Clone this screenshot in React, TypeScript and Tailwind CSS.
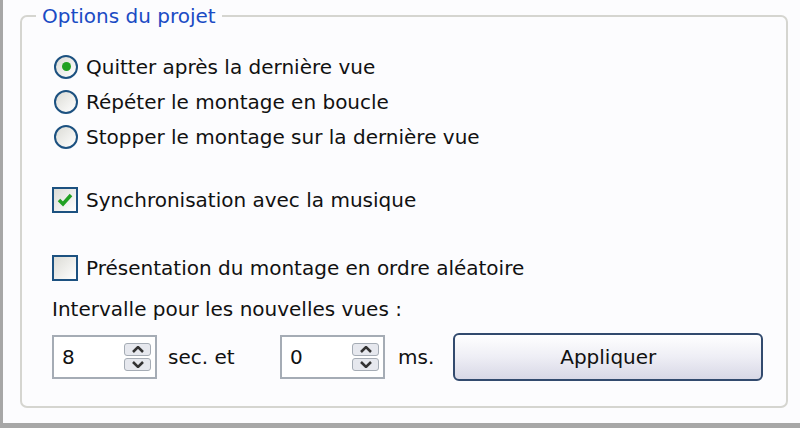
import React from "react";

const font = { fontFamily: '"DejaVu Sans", Tahoma, sans-serif' };

function Radio({ checked, label }: { checked?: boolean; label: string }) {
  return (
    <label className="flex items-center h-[35px]">
      <span className="w-[24px] h-[24px] rounded-full border-2 border-[#1c5180] bg-gradient-to-br from-[#dcdcd6] to-white flex items-center justify-center">
        {checked && <span className="w-[9px] h-[9px] rounded-full bg-[#21a121]" />}
      </span>
      <span className="ml-[8px]">{label}</span>
    </label>
  );
}

function Check({ checked, label }: { checked?: boolean; label: string }) {
  return (
    <label className="flex items-center h-[30px]">
      <span className="w-[26px] h-[26px] border-2 border-[#1c5180] bg-gradient-to-br from-[#dcdcd6] to-white flex items-center justify-center">
        {checked && (
          <svg width="18" height="18" viewBox="0 0 18 18">
            <path d="M3 9 L7 13 L15 4" fill="none" stroke="#21a121" strokeWidth="3.5" />
          </svg>
        )}
      </span>
      <span className="ml-[8px]">{label}</span>
    </label>
  );
}

function Spin({ value }: { value: string }) {
  return (
    <div className="flex items-center w-[105px] h-[44px] border-2 border-[#a5acb5] bg-white pl-[8px] pr-[4px]">
      <span className="flex-1">{value}</span>
      <div className="flex flex-col gap-[2px]">
        <span className="w-[27px] h-[13px] rounded-[3px] border border-[#a5acb5] bg-[#e6e8ee] flex items-center justify-center">
          <svg width="12" height="7" viewBox="0 0 12 7"><path d="M1 6 L6 1 L11 6" fill="none" stroke="#333" strokeWidth="2.5" /></svg>
        </span>
        <span className="w-[27px] h-[13px] rounded-[3px] border border-[#a5acb5] bg-[#e6e8ee] flex items-center justify-center">
          <svg width="12" height="7" viewBox="0 0 12 7"><path d="M1 1 L6 6 L11 1" fill="none" stroke="#333" strokeWidth="2.5" /></svg>
        </span>
      </div>
    </div>
  );
}

export default function App() {
  return (
    <div
      className="w-[800px] h-[428px] bg-[#fcfcfe] border-l-[3px] border-b-[5px] border-[#a7a7a7] pl-[17px] pr-[12px] pt-[4px] text-[20px] text-[#111]"
      style={font}
    >
      <fieldset className="border-2 border-[#d5d5d0] rounded-[7px] h-[404px] pr-[22px] pt-[21px]">
        <legend className="ml-[14px] px-[6px] text-[#1a4bc4] text-[20px] leading-[24px]">Options du projet</legend>
        <div className="pl-[30px]">
          <div className="pl-[2px]">
            <Radio checked label="Quitter après la dernière vue" />
            <Radio label="Répéter le montage en boucle" />
            <Radio label="Stopper le montage sur la dernière vue" />
          </div>
          <div className="mt-[31px]">
            <Check checked label="Synchronisation avec la musique" />
          </div>
          <div className="mt-[38px]">
            <Check label="Présentation du montage en ordre aléatoire" />
          </div>
          <div className="mt-[11px] h-[30px] flex items-center">Intervalle pour les nouvelles vues :</div>
          <div className="mt-[9px] flex items-center">
            <Spin value="8" />
            <span className="ml-[11px] w-[112px]">sec. et</span>
            <Spin value="0" />
            <span className="ml-[13px]">ms.</span>
            <button className="ml-[19px] w-[310px] h-[48px] rounded-[6px] border-2 border-[#324a6e] bg-gradient-to-b from-white via-[#eeeef5] to-[#d8d8e6] text-[20px]">
              Appliquer
            </button>
          </div>
        </div>
      </fieldset>
    </div>
  );
}
